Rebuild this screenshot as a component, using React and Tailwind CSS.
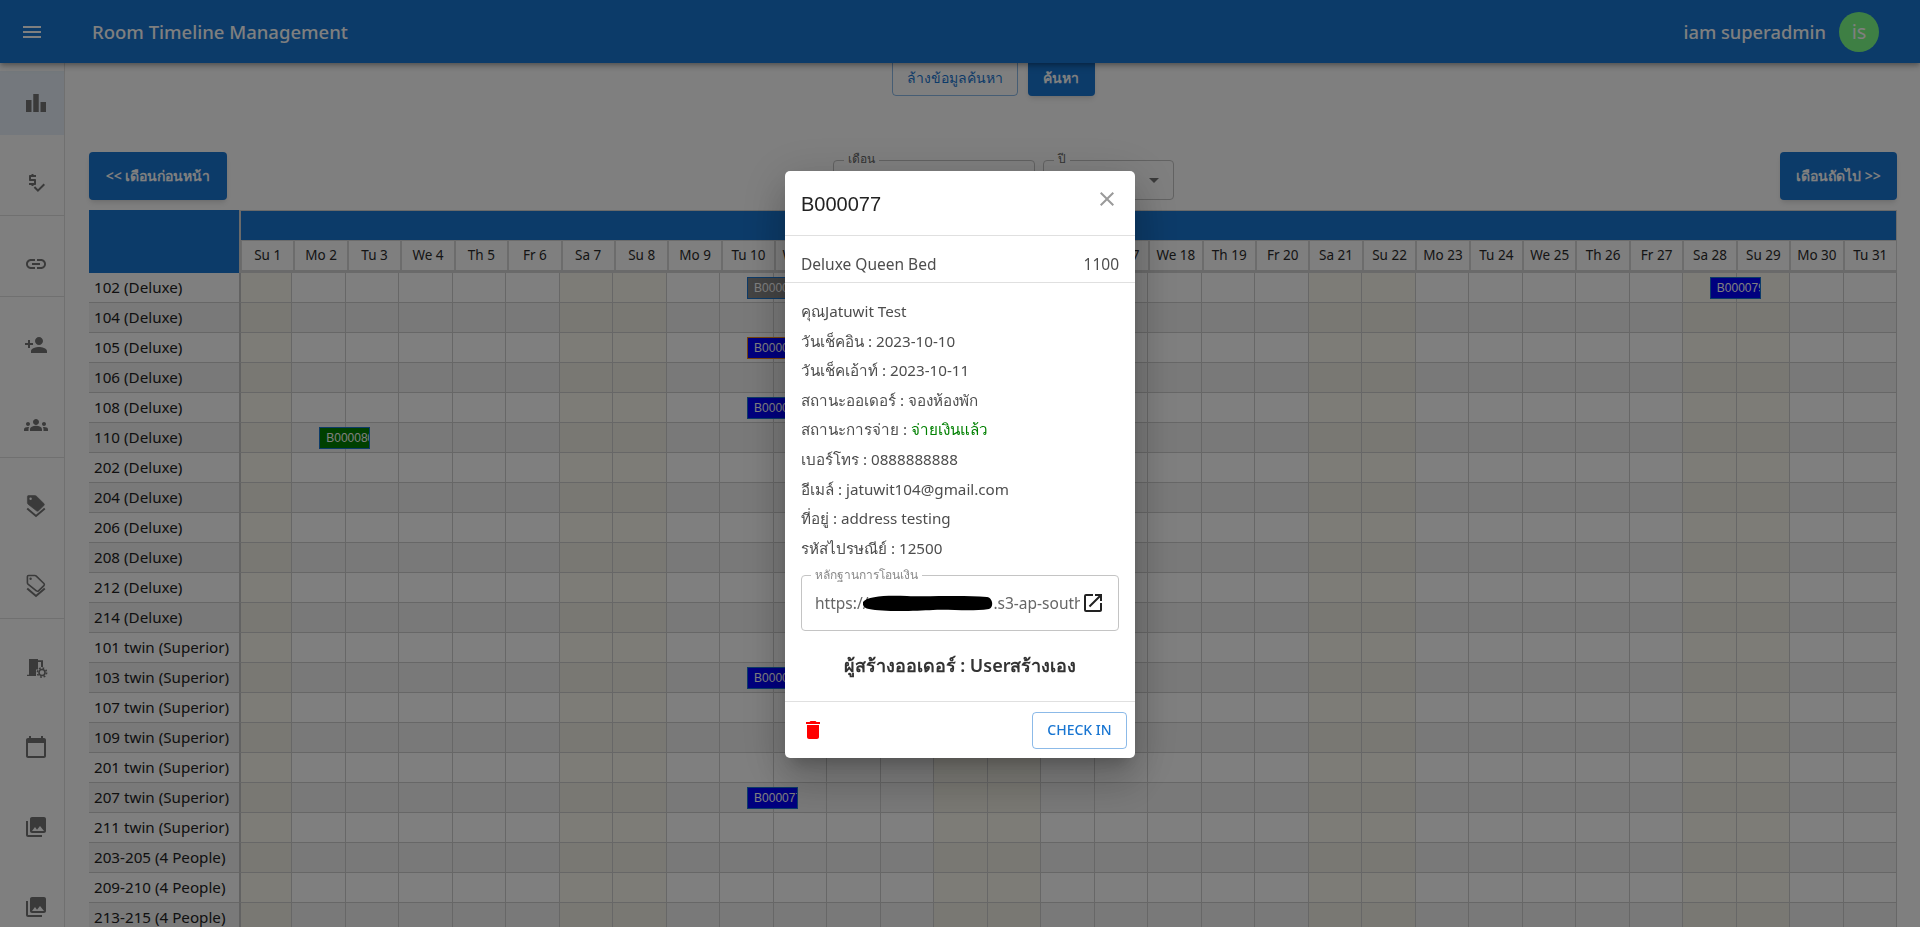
import React from 'react';
import {
  MdMenu, MdLeaderboard, MdPriceCheck, MdLink, MdPersonAdd, MdGroups, MdCalendarToday,
  MdCollections, MdClose, MdOpenInNew, MdDelete, MdArrowDropDown,
} from 'react-icons/md';

const FONT = 'font-["Noto_Sans",Roboto,sans-serif]';

const dayNames = ['Su', 'Mo', 'Tu', 'We', 'Th', 'Fr', 'Sa'];
const days = Array.from({ length: 31 }, (_, i) => ({
  label: `${dayNames[i % 7]} ${i + 1}`,
  weekend: i % 7 === 0 || i % 7 === 6,
}));

const rooms = [
  '102 (Deluxe)', '104 (Deluxe)', '105 (Deluxe)', '106 (Deluxe)', '108 (Deluxe)', '110 (Deluxe)',
  '202 (Deluxe)', '204 (Deluxe)', '206 (Deluxe)', '208 (Deluxe)', '212 (Deluxe)', '214 (Deluxe)',
  '101 twin (Superior)', '103 twin (Superior)', '107 twin (Superior)', '109 twin (Superior)',
  '201 twin (Superior)', '207 twin (Superior)', '211 twin (Superior)',
  '203-205 (4 People)', '209-210 (4 People)', '213-215 (4 People)',
];

// key is room index + day number
const bookings = {
  '0-10': { code: 'B000076', cls: 'bg-[#888888] border-[#1976d2]' },
  '0-28': { code: 'B000079', cls: 'bg-[#0000ff] border-[#1976d2]' },
  '2-10': { code: 'B000075', cls: 'bg-[#0000ff] border-[#ed8a1c]' },
  '4-10': { code: 'B000074', cls: 'bg-[#0000ff] border-[#1976d2]' },
  '5-2': { code: 'B000080', cls: 'bg-[#008000] border-[#1976d2]' },
  '13-10': { code: 'B000078', cls: 'bg-[#0000ff] border-[#1976d2]' },
  '17-10': { code: 'B000077', cls: 'bg-[#0000ff] border-[#1976d2]' },
};

const TagStack = ({ outlined }) => (
  <svg width="24" height="24" viewBox="0 0 24 24" fill="none">
    <path
      d="M4.5 1.5h6.4c.5 0 1 .2 1.4.6l7.6 7.4c.6.6.6 1.5 0 2.1l-5.4 5.2c-.6.6-1.5.6-2.1 0L4 10.2c-.4-.4-.6-.9-.6-1.4V2.6c0-.6.5-1.1 1.1-1.1z"
      fill={outlined ? 'none' : '#757575'}
      stroke="#757575"
      strokeWidth={outlined ? 1.6 : 0.6}
    />
    <circle cx="6.6" cy="4.8" r="1.2" fill={outlined ? '#757575' : '#ffffff'} />
    <path d="M3.2 14.6 12 22l8.8-7.4" stroke="#757575" strokeWidth="2" />
  </svg>
);

const BuildingGear = () => (
  <svg width="24" height="24" viewBox="0 0 24 24" fill="#757575">
    <path d="M3 21v-1.3h2V4h9v1.2h5V12h-2V7h-3v7.5h-2V21H3z" />
    <circle cx="18" cy="17.5" r="3" fill="none" stroke="#757575" strokeWidth="1.6" />
    <circle cx="18" cy="17.5" r="4.6" fill="none" stroke="#757575" strokeWidth="1.6" strokeDasharray="1.8 1.8" />
  </svg>
);

const sideGroups = [
  [<MdLeaderboard size={24} />, <MdPriceCheck size={24} />],
  [<MdLink size={24} />],
  [<MdPersonAdd size={24} />, <MdGroups size={24} />],
  [<TagStack />, <TagStack outlined />],
  [<BuildingGear />, <MdCalendarToday size={24} />, <MdCollections size={24} />, <MdCollections size={24} />],
];

const Sidebar = () => (
  <aside className="w-[65px] shrink-0 border-r border-[#e0e0e0] bg-white pt-2">
    {sideGroups.map((group, g) => (
      <div key={g} className={g < sideGroups.length - 1 ? 'border-b border-[#e0e0e0]' : ''}>
        {group.map((icon, i) => (
          <div
            key={i}
            className={`flex h-16 items-center pl-6 text-[#757575] ${g === 0 && i === 0 ? 'bg-[#e8f1fa]' : 'mt-4'}`}
          >
            {icon}
          </div>
        ))}
      </div>
    ))}
  </aside>
);

const OutlineSelect = ({ label, width, arrow }) => (
  <div className={`relative h-10 rounded border border-[#c4c4c4] ${width}`}>
    <span className="absolute -top-[10px] left-[10px] bg-white px-[4px] text-xs text-[#666666]">{label}</span>
    {arrow && <MdArrowDropDown size={24} className="absolute right-[7px] top-[7px] text-[#757575]" />}
  </div>
);

const Timeline = () => (
  <div className="mt-[10px]">
    <div className="grid h-[63px] grid-cols-[150px_minmax(0,1fr)]">
      <div className="bg-[#1976d2]" />
      <div className="flex flex-col border-b-[3px] border-l-2 border-[#d4d4d4]">
        <div className="h-[30px] border-r border-t border-[#d4d4d4] bg-[#1976d2]" />
        <div className="grid flex-1 grid-cols-[repeat(31,minmax(0,1fr))]">
          {days.map((d) => (
            <div
              key={d.label}
              className="flex items-center justify-center border-x border-t border-[#d8d8d8] bg-white text-[13.5px] text-[#2b2b2b]"
            >
              {d.label}
            </div>
          ))}
        </div>
      </div>
    </div>
    {rooms.map((room, r) => (
      <div key={room} className="grid h-[30px] grid-cols-[150px_repeat(31,minmax(0,1fr))]">
        <div className={`flex items-center border-b border-[#cfcfcf] pl-[5px] text-[15.2px] text-[#222222] ${r % 2 ? 'bg-[#f3f3f3]' : 'bg-white'}`}>
          {room}
        </div>
        {days.map((d, i) => {
          const b = bookings[`${r}-${i + 1}`];
          const bg = d.weekend
            ? (r % 2 ? 'bg-[#f3f1e6]' : 'bg-[#fbf9ef]')
            : (r % 2 ? 'bg-[#f3f3f3]' : 'bg-white');
          return (
            <div
              key={d.label}
              className={`relative border-b border-r border-[#cfcfcf] ${i === 0 ? 'border-l-2 border-l-[#c4c4c4]' : ''} ${bg}`}
            >
              {b && (
                <div className={`absolute left-[calc(50%+0.5px)] top-[4px] z-10 h-[22px] w-[51px] overflow-hidden whitespace-nowrap border py-[3px] pl-[6px] font-["Liberation_Sans",sans-serif] text-xs leading-[14px] text-white ${b.cls}`}>
                  {b.code}
                </div>
              )}
            </div>
          );
        })}
      </div>
    ))}
  </div>
);

const detailLines = [
  'คุณJatuwit Test',
  'วันเช็คอิน : 2023-10-10',
  'วันเช็คเอ้าท์ : 2023-10-11',
  'สถานะออเดอร์ : จองห้องพัก',
];
const detailLines2 = [
  'เบอร์โทร : 0888888888',
  'อีเมล์ : jatuwit104@gmail.com',
  'ที่อยู่ : address testing',
  'รหัสไปรษณีย์ : 12500',
];

const BookingModal = () => (
  <div className="fixed inset-0 z-50 flex items-start justify-center bg-black/50 pt-[171px]">
    <div className="w-[350px] overflow-hidden rounded-[5px] bg-white text-[15.2px] text-[#4d4d4d] shadow-[0_11px_15px_-7px_rgba(0,0,0,0.2),0_24px_38px_3px_rgba(0,0,0,0.14),0_9px_46px_8px_rgba(0,0,0,0.12)]">
      <div className="flex h-[65px] items-start justify-between border-b border-[#e0e0e0] pl-4 pr-4">
        <h3 className='mt-[21px] font-["Liberation_Sans",sans-serif] text-xl leading-6 text-[#222222]'>B000077</h3>
        <MdClose size={24} className="mt-4 text-[#9a9a9a]" />
      </div>
      <div className="flex h-[47px] items-end justify-between border-b border-[#e0e0e0] px-4 pb-[6px]">
        <span className="text-[15.5px]">Deluxe Queen Bed</span>
        <span className="text-[15.5px]">1100</span>
      </div>
      <div className="px-4 pt-[14px] leading-[29.6px]">
        {detailLines.map((t) => <div key={t}>{t}</div>)}
        <div>สถานะการจ่าย : <span className="font-medium text-[#008000]">จ่ายเงินแล้ว</span></div>
        {detailLines2.map((t) => <div key={t}>{t}</div>)}
      </div>
      <div className="relative mx-4 mt-[12px] flex h-14 items-center rounded border border-[#c4c4c4] pl-[13px] pr-[13px]">
        <span className="absolute -top-[9px] left-[9px] bg-white px-[4px] text-xs leading-4 text-[#8a8a8a]">หลักฐานการโอนเงิน</span>
        <span className="flex w-[265px] items-center overflow-hidden whitespace-nowrap text-[15.5px] text-[#666666]">
          https://
          <svg className="-ml-[5px] shrink-0" width="130" height="18" viewBox="0 0 130 18">
            <path d="M0 8C4 2 24 1 44 2s54-1 80 1c6 1 7 10 2 12-20 3-38 0-56 1S20 18 6 15C1 14-1 11 0 8z" fill="#000000" />
          </svg>
          .s3-ap-southeast-1
        </span>
        <MdOpenInNew size={24} className="ml-auto text-[#222222]" />
      </div>
      <div className="mt-[19px] h-[52px] border-b border-[#e0e0e0] text-center text-lg font-semibold leading-[30px] text-[#333333]">
        ผู้สร้างออเดอร์ : Userสร้างเอง
      </div>
      <div className="flex h-[56px] items-center justify-between pl-4 pr-2">
        <MdDelete size={24} className="text-[#ff0000]" />
        <button type="button" className='h-[37px] w-[95px] rounded border border-[#1976d2]/50 text-sm font-medium text-[#1976d2]'>
          CHECK IN
        </button>
      </div>
    </div>
  </div>
);

export default function App() {
  return (
    <div className={`relative flex h-screen flex-col overflow-hidden bg-white ${FONT}`}>
      <header className="z-20 flex h-[63px] shrink-0 items-center bg-[#1976d2] pl-5 pr-[41px] text-white shadow-[0_2px_4px_-1px_rgba(0,0,0,0.2),0_4px_5px_0_rgba(0,0,0,0.14),0_1px_10px_0_rgba(0,0,0,0.12)]">
        <MdMenu size={24} />
        <h1 className="ml-[48px] text-[18.5px] font-medium">Room Timeline Management</h1>
        <span className="ml-auto text-[18.3px] font-medium">iam superadmin</span>
        <div className="ml-[13px] flex size-10 items-center justify-center rounded-full bg-[#7cff88] text-xl">is</div>
      </header>
      <div className="flex min-h-0 flex-1">
        <Sidebar />
        <main className="min-w-0 flex-1 pl-6 pr-[23px]">
          <div className="-mt-[4px] flex justify-center gap-[10px]">
            <button type="button" className="h-[37px] w-[126px] rounded border border-[#1976d2]/50 text-sm font-medium text-[#1976d2]">ล้างข้อมูลค้นหา</button>
            <button type="button" className="h-[37px] w-[67px] rounded bg-[#1976d2] text-sm font-semibold text-white shadow-md">ค้นหา</button>
          </div>
          <div className="mt-[56px] flex items-start justify-between">
            <button type="button" className="h-12 w-[138px] rounded bg-[#1976d2] text-sm font-semibold text-white shadow-md">&lt;&lt; เดือนก่อนหน้า</button>
            <div className="mt-2 flex gap-2">
              <OutlineSelect label="เดือน" width="w-[202px]" />
              <OutlineSelect label="ปี" width="w-[131px]" arrow />
            </div>
            <button type="button" className="h-12 w-[117px] rounded bg-[#1976d2] text-sm font-semibold text-white shadow-md">เดือนถัดไป &gt;&gt;</button>
          </div>
          <Timeline />
        </main>
      </div>
      <BookingModal />
    </div>
  );
}
